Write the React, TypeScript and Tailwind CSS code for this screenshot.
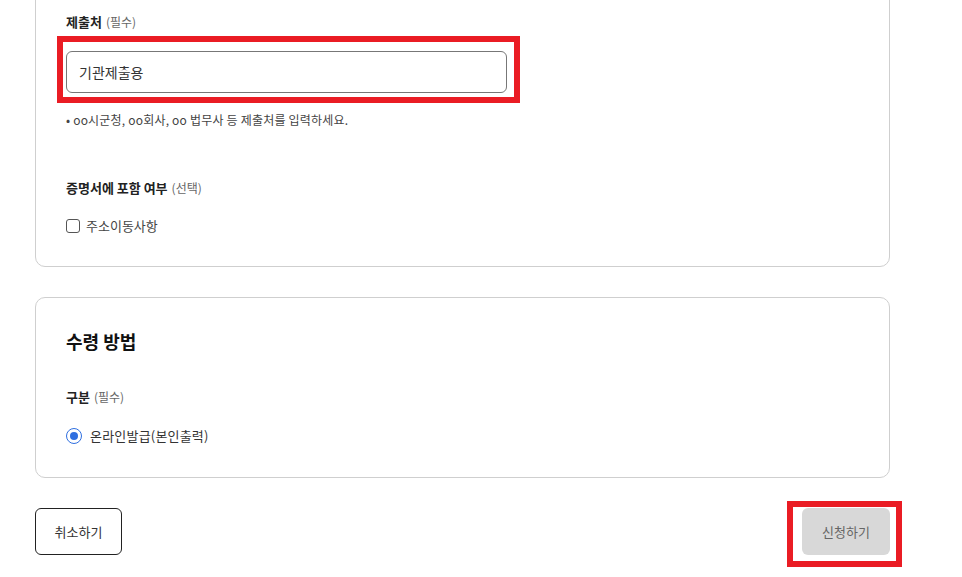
const font = { fontFamily: '"Noto Sans CJK KR", "Noto Sans", sans-serif' };

function Label({ title, hint }: { title: string; hint: string }) {
  return (
    <div className="flex items-baseline gap-1 text-[13px] leading-[20px]">
      <span className="font-bold text-[#222]">{title}</span>
      <span className="text-[12px] text-[#666]">{hint}</span>
    </div>
  );
}

export default function App() {
  return (
    <div style={font} className="h-[577px] w-full overflow-hidden bg-white">
      <div className="ml-[35px] w-[855px]">
        {/* 신청 정보 카드 (위쪽은 스크롤로 가려짐) */}
        <section className="-mt-[10px] rounded-[10px] border border-[#cfcfcf] px-[30px] pb-[30px] pt-[21px]">
          <Label title="제출처" hint="(필수)" />
          <div className="relative mt-[19px] w-[441px]">
            <div className="flex h-[42px] items-center rounded-[6px] border border-[#777] pl-3 text-[14px] text-[#333]">
              기관제출용
            </div>
            <div className="pointer-events-none absolute -bottom-[10px] -left-[9px] -right-[13px] -top-[15px] border-[6px] border-[#ea1c24]" />
          </div>
          <p className="mt-[18px] text-[12px] tracking-[0.2px] leading-[18px] text-[#444]">
            • oo시군청, oo회사, oo 법무사 등 제출처를 입력하세요.
          </p>
          <div className="mt-[49px]">
            <Label title="증명서에 포함 여부" hint="(선택)" />
          </div>
          <label className="mt-[18px] flex items-center gap-[6px] text-[13px] leading-[20px] text-[#444]">
            <span className="h-[14px] w-[14px] rounded-[3px] border border-[#555]" />
            주소이동사항
          </label>
        </section>

        {/* 수령 방법 */}
        <section className="mt-[30px] rounded-[10px] border border-[#cfcfcf] px-[30px] pb-[31px] pt-[30px]">
          <h2 className="text-[18px] font-bold leading-[26px] text-[#111]">수령 방법</h2>
          <div className="mt-[33px]">
            <Label title="구분" hint="(필수)" />
          </div>
          <label className="mt-[19px] flex items-center gap-[8px] text-[13px] tracking-[0.2px] leading-[20px] text-[#333]">
            <span className="flex h-[16px] w-[16px] items-center justify-center rounded-full border-[1.5px] border-[#2f6fe0]">
              <span className="h-[8px] w-[8px] rounded-full bg-[#2f6fe0]" />
            </span>
            온라인발급(본인출력)
          </label>
        </section>

        <div className="mt-[30px] flex justify-between">
          <button className="h-[47px] w-[87px] rounded-[6px] border border-[#222] bg-white text-[13px] text-[#333]">
            취소하기
          </button>
          <div className="relative">
            <button className="h-[47px] w-[88px] rounded-[6px] bg-[#d8d8d8] text-[13px] text-[#666]">
              신청하기
            </button>
            <div className="pointer-events-none absolute -bottom-[12px] -left-[15px] -right-[12px] -top-[7px] border-[6px] border-[#ea1c24]" />
          </div>
        </div>
      </div>
    </div>
  );
}
